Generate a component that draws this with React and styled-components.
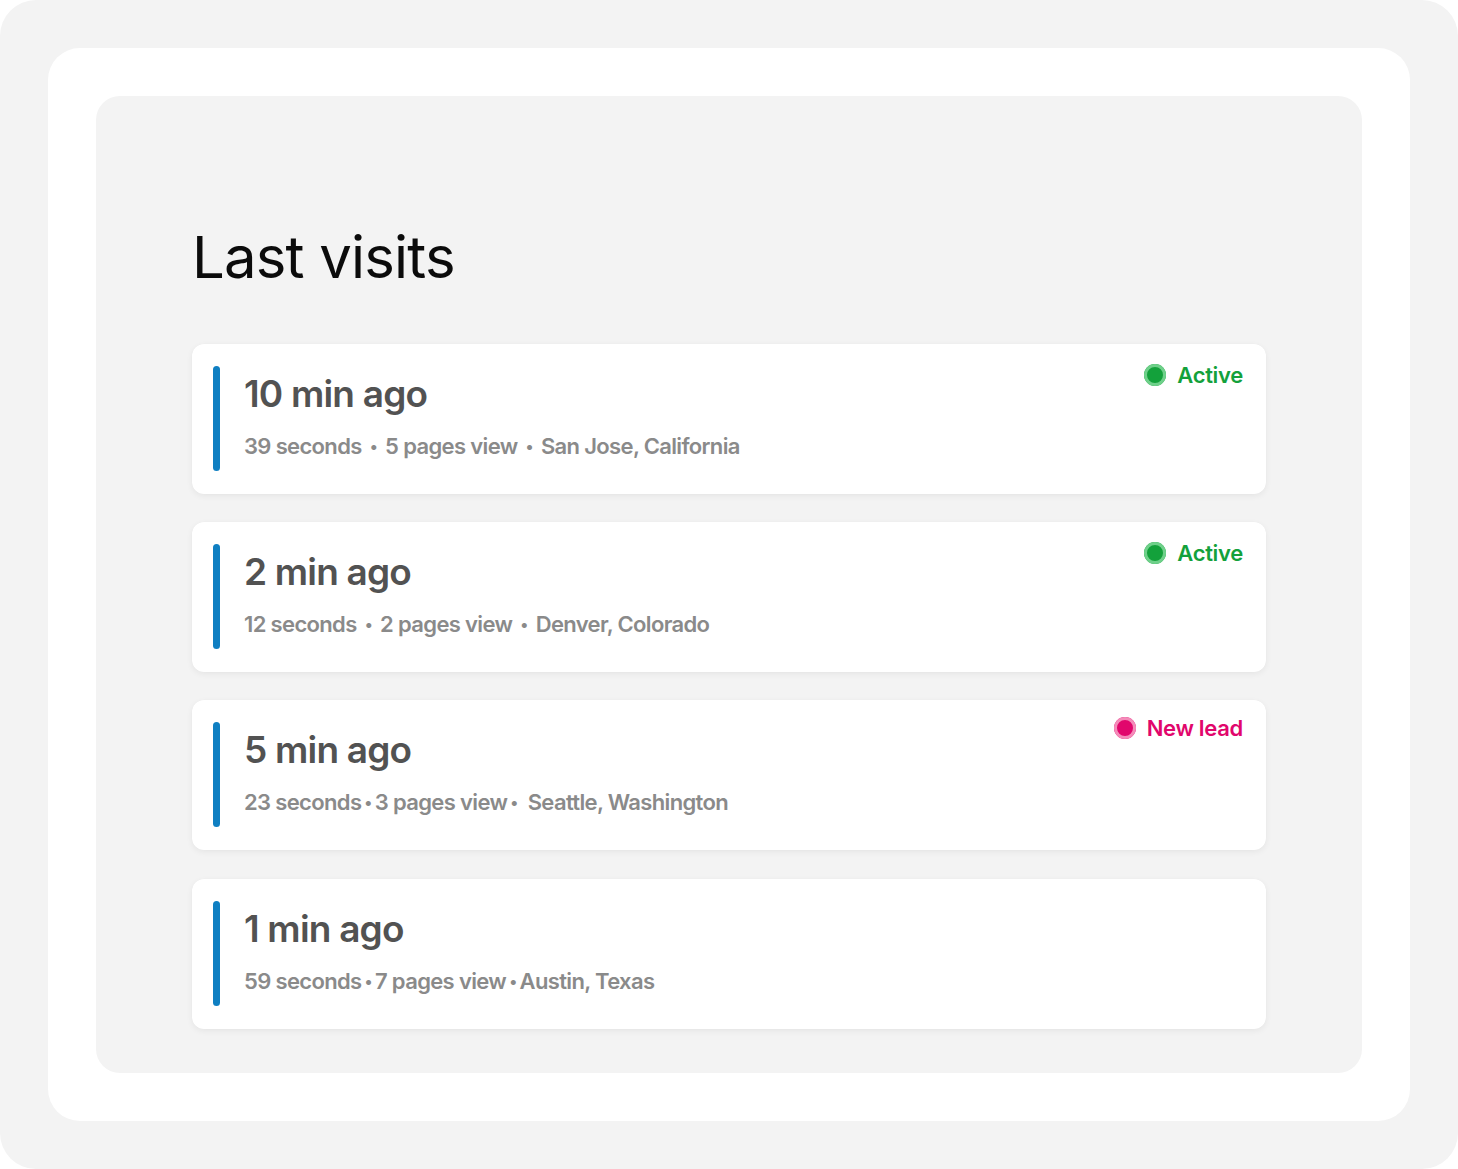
import React from "react";
import styled, { createGlobalStyle } from "styled-components";

const Global = createGlobalStyle`
  html, body { margin: 0; padding: 0; background: #ffffff; }
  body { font-family: Inter, "Noto Sans", sans-serif; -webkit-font-smoothing: antialiased; }
  * { box-sizing: border-box; }
`;

const Frame = styled.div`
  width: 1458px;
  height: 1169px;
  background: #f3f3f3;
  border-radius: 36px;
  padding: 48px;
`;

const Sheet = styled.div`
  height: 100%;
  background: #ffffff;
  border-radius: 32px;
  padding: 48px;
`;

const Panel = styled.section`
  height: 100%;
  background: #f3f3f3;
  border-radius: 24px;
  padding: 132px 96px 45px;
  display: flex;
  flex-direction: column;
  gap: 58px;
`;

const Heading = styled.h1`
  margin: 0;
  font-size: 58px;
  line-height: 1;
  font-weight: 400;
  letter-spacing: -0.8px;
  color: #0b0b0b;
`;

const List = styled.div`
  display: flex;
  flex-direction: column;
  gap: 28.2px;
`;

const Card = styled.article`
  display: flex;
  gap: 24px;
  height: 150px;
  padding: 22px 23px 23px 21px;
  background: #ffffff;
  border-radius: 12px;
  box-shadow: 0 2px 6px rgba(0, 0, 0, 0.06), 0 0 1px rgba(0, 0, 0, 0.04);
`;

const Bar = styled.div`
  width: 7px;
  border-radius: 4px;
  background: #0f7fc2;
`;

const Content = styled.div`
  flex: 1;
  display: flex;
  flex-direction: column;
  gap: 23px;
  padding-top: 9px;
`;

const Title = styled.h2`
  margin: 0;
  font-size: 37px;
  line-height: 1;
  font-weight: 600;
  letter-spacing: -0.8px;
  color: #525252;
`;

const Meta = styled.p`
  margin: 0;
  font-size: 22px;
  line-height: 1;
  font-weight: 600;
  letter-spacing: -0.65px;
  color: #8a8a8a;
  display: flex;
  align-items: center;
`;

const Sep = styled.span`
  font-size: 16px;
  margin: 0 ${(p) => p.$r}px 0 ${(p) => p.$l}px;
`;

const Status = styled.div`
  align-self: flex-start;
  display: flex;
  align-items: center;
  gap: 11px;
  margin-top: ${(p) => p.$offset}px;
  font-size: 22px;
  line-height: 22px;
  font-weight: 600;
  letter-spacing: -0.3px;
  color: ${(p) => p.$color};
`;

const Dot = styled.span`
  width: 22px;
  height: 22px;
  border-radius: 50%;
  background: ${(p) => p.$color};
  box-shadow: inset 0 0 0 3px ${(p) => p.$ring};
`;

const STATUS = {
  active: { label: "Active", color: "#13a13b", ring: "#6fd08a", offset: -2 },
  lead: { label: "New lead", color: "#e1066c", ring: "#f48bb9", offset: -5 },
};

const visits = [
  { time: "10 min ago", parts: ["39 seconds", "5 pages view", "San Jose, California"], seps: [[8, 8], [8, 8]], status: "active" },
  { time: "2 min ago", parts: ["12 seconds", "2 pages view", "Denver, Colorado"], seps: [[8, 8], [8, 8]], status: "active" },
  { time: "5 min ago", parts: ["23 seconds", "3 pages view", "Seattle, Washington"], seps: [[3, 3], [3, 10]], status: "lead" },
  { time: "1 min ago", parts: ["59 seconds", "7 pages view", "Austin, Texas"], seps: [[3, 3], [3, 3]] },
];

export default function App() {
  return (
    <>
      <Global />
      <Frame>
        <Sheet>
          <Panel>
            <Heading>Last visits</Heading>
            <List>
              {visits.map((v) => {
                const s = v.status && STATUS[v.status];
                return (
                  <Card key={v.time}>
                    <Bar />
                    <Content>
                      <Title>{v.time}</Title>
                      <Meta>
                        {v.parts.map((p, i) => (
                          <React.Fragment key={p}>
                            {i > 0 && <Sep $l={v.seps[i - 1][0]} $r={v.seps[i - 1][1]}>•</Sep>}
                            <span>{p}</span>
                          </React.Fragment>
                        ))}
                      </Meta>
                    </Content>
                    {s && (
                      <Status $color={s.color} $offset={s.offset}>
                        <Dot $color={s.color} $ring={s.ring} />
                        {s.label}
                      </Status>
                    )}
                  </Card>
                );
              })}
            </List>
          </Panel>
        </Sheet>
      </Frame>
    </>
  );
}
